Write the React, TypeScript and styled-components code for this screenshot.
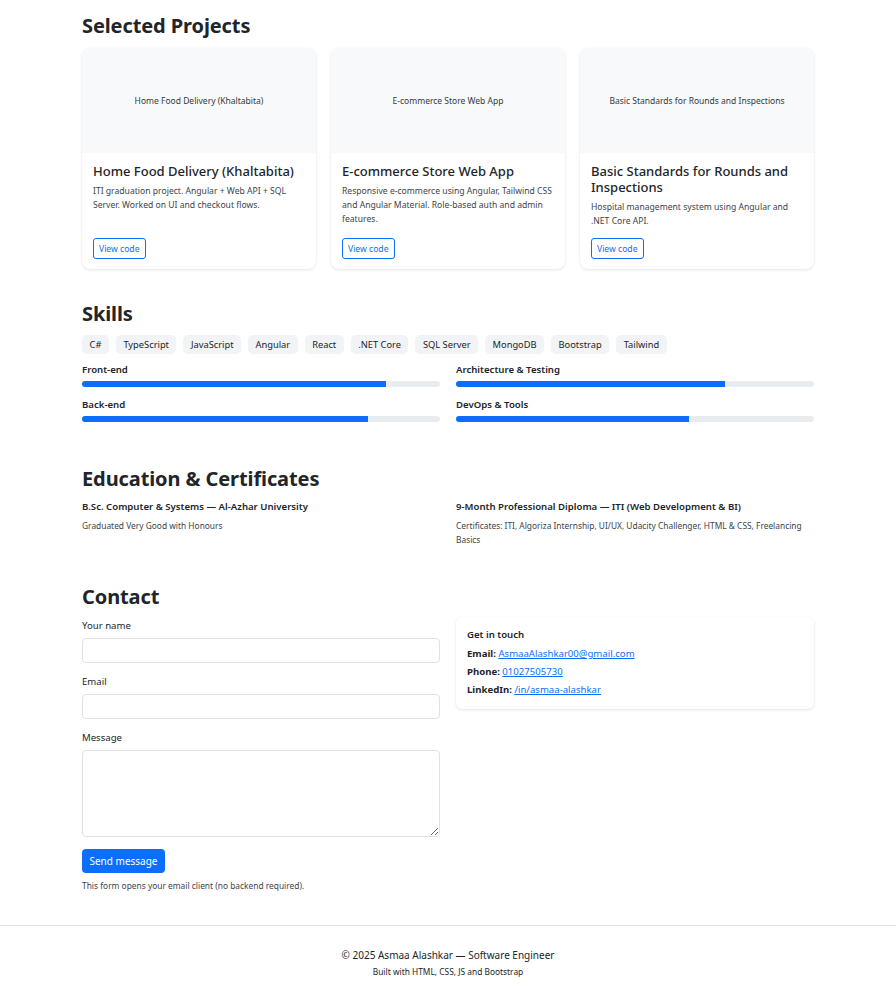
import React from "react";
import styled, { createGlobalStyle } from "styled-components";

const Global = createGlobalStyle`
  html, body { margin: 0; padding: 0; background: #fff; }
  body {
    font-family: "Noto Sans", "Open Sans", sans-serif;
    color: #212529;
    -webkit-font-smoothing: antialiased;
  }
  * { box-sizing: border-box; }
`;

const Main = styled.main`
  width: 732px;
  margin: 0 auto;
  padding-top: 13px;
`;

const Section = styled.section<{ $mb?: number }>`
  margin-bottom: ${(p) => p.$mb ?? 33}px;
`;

const H2 = styled.h2<{ $mb?: number }>`
  font-size: 20px;
  line-height: 25px;
  font-weight: 700;
  letter-spacing: -0.1px;
  margin: 0 0 ${(p) => p.$mb ?? 10}px;
`;

const ProjectGrid = styled.div`
  display: grid;
  grid-template-columns: repeat(3, 1fr);
  gap: 15px;
`;

const Card = styled.article`
  display: flex;
  flex-direction: column;
  border-radius: 8px;
  background: #fff;
  box-shadow: 0 1px 3px rgba(0, 0, 0, 0.1), 0 0 1px rgba(0, 0, 0, 0.06);
  overflow: hidden;
  min-height: 220px;
`;

const CardImage = styled.div`
  height: 105px;
  background: #f8f9fa;
  display: flex;
  align-items: center;
  justify-content: center;
  font-size: 8.5px;
  color: #343a40;
`;

const CardBody = styled.div`
  flex: 1;
  display: flex;
  flex-direction: column;
  padding: 10px 11px 10px;
`;

const CardTitle = styled.h3`
  font-size: 13px;
  line-height: 16px;
  font-weight: 500;
  margin: 0 0 5px;
`;

const CardText = styled.p`
  font-size: 8.6px;
  line-height: 14px;
  color: #3d444b;
  margin: 0 0 10px;
`;

const OutlineButton = styled.a`
  margin-top: auto;
  align-self: flex-start;
  display: inline-flex;
  align-items: center;
  height: 21px;
  padding: 0 5px;
  font-size: 8.6px;
  color: #0d6efd;
  border: 1px solid #0d6efd;
  border-radius: 3px;
  text-decoration: none;
`;

const BadgeRow = styled.div`
  display: flex;
  flex-wrap: wrap;
  gap: 7px;
  margin-bottom: 8px;
`;

const Badge = styled.span`
  display: inline-flex;
  align-items: center;
  height: 19px;
  padding: 0 7.5px;
  font-size: 9.3px;
  background: #f1f3f5;
  border-radius: 5px;
  color: #212529;
`;

const TwoCol = styled.div`
  display: grid;
  grid-template-columns: 1fr 1fr;
  column-gap: 16px;
`;

const SkillItem = styled.div`
  margin-bottom: 10px;
`;

const SkillLabel = styled.div`
  font-size: 9.6px;
  line-height: 15px;
  font-weight: 600;
  margin-bottom: 4px;
`;

const Track = styled.div`
  height: 6px;
  border-radius: 3px;
  background: #e9ecef;
  overflow: hidden;
`;

const Fill = styled.div`
  height: 100%;
  background: #0d6efd;
`;

const EduTitle = styled.div`
  font-size: 9.6px;
  line-height: 15px;
  font-weight: 600;
  margin-bottom: 5px;
`;

const EduText = styled.div`
  font-size: 8.4px;
  line-height: 14px;
  color: #3d444b;
`;

const Form = styled.form`
  display: flex;
  flex-direction: column;
`;

const Label = styled.label`
  font-size: 9.6px;
  line-height: 15px;
  margin-bottom: 5px;
`;

const Input = styled.input`
  height: 25px;
  border: 1px solid #dee2e6;
  border-radius: 4px;
  margin-bottom: 11px;
  font: inherit;
`;

const TextArea = styled.textarea`
  height: 87px;
  border: 1px solid #dee2e6;
  border-radius: 4px;
  margin-bottom: 12px;
  resize: vertical;
  font: inherit;
`;

const PrimaryButton = styled.button`
  align-self: flex-start;
  height: 24px;
  width: 83px;
  padding: 0;
  background: #0d6efd;
  color: #fff;
  border: none;
  border-radius: 4px;
  font-family: inherit;
  font-size: 10px;
`;

const Note = styled.p`
  font-size: 8.4px;
  line-height: 15px;
  color: #3d444b;
  margin: 5px 0 0;
`;

const InfoCard = styled.div`
  align-self: start;
  padding: 11px 11px 10px;
  border-radius: 6px;
  box-shadow: 0 1px 3px rgba(0, 0, 0, 0.1), 0 0 1px rgba(0, 0, 0, 0.06);
  margin-top: -1px;
`;

const InfoTitle = styled.div`
  font-size: 9.6px;
  line-height: 13px;
  font-weight: 600;
  margin-bottom: 4px;
`;

const InfoRow = styled.div`
  font-size: 9.6px;
  line-height: 18px;
  b { font-weight: 700; }
  a { color: #0d6efd; text-decoration: underline; }
`;

const Footer = styled.footer`
  border-top: 1px solid #dee2e6;
  padding: 21px 0 20px;
  text-align: center;
`;

const FooterLine = styled.div`
  font-size: 10px;
  line-height: 16px;
  color: #212529;
`;

const FooterSmall = styled.div`
  font-size: 8.4px;
  line-height: 13px;
  margin-top: 2px;
  color: #212529;
`;

const projects = [
  {
    title: "Home Food Delivery (Khaltabita)",
    text: "ITI graduation project. Angular + Web API + SQL Server. Worked on UI and checkout flows.",
  },
  {
    title: "E-commerce Store Web App",
    text: "Responsive e-commerce using Angular, Tailwind CSS and Angular Material. Role-based auth and admin features.",
  },
  {
    title: "Basic Standards for Rounds and Inspections",
    text: "Hospital management system using Angular and .NET Core API.",
  },
];

const badges = ["C#", "TypeScript", "JavaScript", "Angular", "React", ".NET Core", "SQL Server", "MongoDB", "Bootstrap", "Tailwind"];

const skills = [
  { label: "Front-end", value: 85 },
  { label: "Architecture & Testing", value: 75 },
  { label: "Back-end", value: 80 },
  { label: "DevOps & Tools", value: 65 },
];

export default function App() {
  return (
    <>
      <Global />
      <Main>
        <Section $mb={32}>
          <H2 $mb={10}>Selected Projects</H2>
          <ProjectGrid>
            {projects.map((p) => (
              <Card key={p.title}>
                <CardImage>{p.title}</CardImage>
                <CardBody>
                  <CardTitle>{p.title}</CardTitle>
                  <CardText>{p.text}</CardText>
                  <OutlineButton href="#">View code</OutlineButton>
                </CardBody>
              </Card>
            ))}
          </ProjectGrid>
        </Section>

        <Section $mb={34}>
          <H2 $mb={9}>Skills</H2>
          <BadgeRow>
            {badges.map((b) => (
              <Badge key={b}>{b}</Badge>
            ))}
          </BadgeRow>
          <TwoCol>
            {skills.map((s) => (
              <SkillItem key={s.label}>
                <SkillLabel>{s.label}</SkillLabel>
                <Track>
                  <Fill style={{ width: `${s.value}%` }} />
                </Track>
              </SkillItem>
            ))}
          </TwoCol>
        </Section>

        <Section $mb={37}>
          <H2 $mb={8}>Education &amp; Certificates</H2>
          <TwoCol>
            <div>
              <EduTitle>B.Sc. Computer &amp; Systems — Al-Azhar University</EduTitle>
              <EduText>Graduated Very Good with Honours</EduText>
            </div>
            <div>
              <EduTitle>9-Month Professional Diploma — ITI (Web Development &amp; BI)</EduTitle>
              <EduText>
                Certificates: ITI, Algoriza Internship, UI/UX, Udacity Challenger, HTML &amp; CSS, Freelancing Basics
              </EduText>
            </div>
          </TwoCol>
        </Section>

        <Section $mb={32}>
          <H2 $mb={9}>Contact</H2>
          <TwoCol>
            <Form onSubmit={(e) => e.preventDefault()}>
              <Label htmlFor="name">Your name</Label>
              <Input id="name" type="text" />
              <Label htmlFor="email">Email</Label>
              <Input id="email" type="email" />
              <Label htmlFor="msg">Message</Label>
              <TextArea id="msg" />
              <PrimaryButton type="submit">Send message</PrimaryButton>
              <Note>This form opens your email client (no backend required).</Note>
            </Form>
            <InfoCard>
              <InfoTitle>Get in touch</InfoTitle>
              <InfoRow>
                <b>Email:</b> <a href="#">AsmaaAlashkar00@gmail.com</a>
              </InfoRow>
              <InfoRow>
                <b>Phone:</b> <a href="#">01027505730</a>
              </InfoRow>
              <InfoRow>
                <b>LinkedIn:</b> <a href="#">/in/asmaa-alashkar</a>
              </InfoRow>
            </InfoCard>
          </TwoCol>
        </Section>
      </Main>
      <Footer>
        <FooterLine>© 2025 Asmaa Alashkar — Software Engineer</FooterLine>
        <FooterSmall>Built with HTML, CSS, JS and Bootstrap</FooterSmall>
      </Footer>
    </>
  );
}
